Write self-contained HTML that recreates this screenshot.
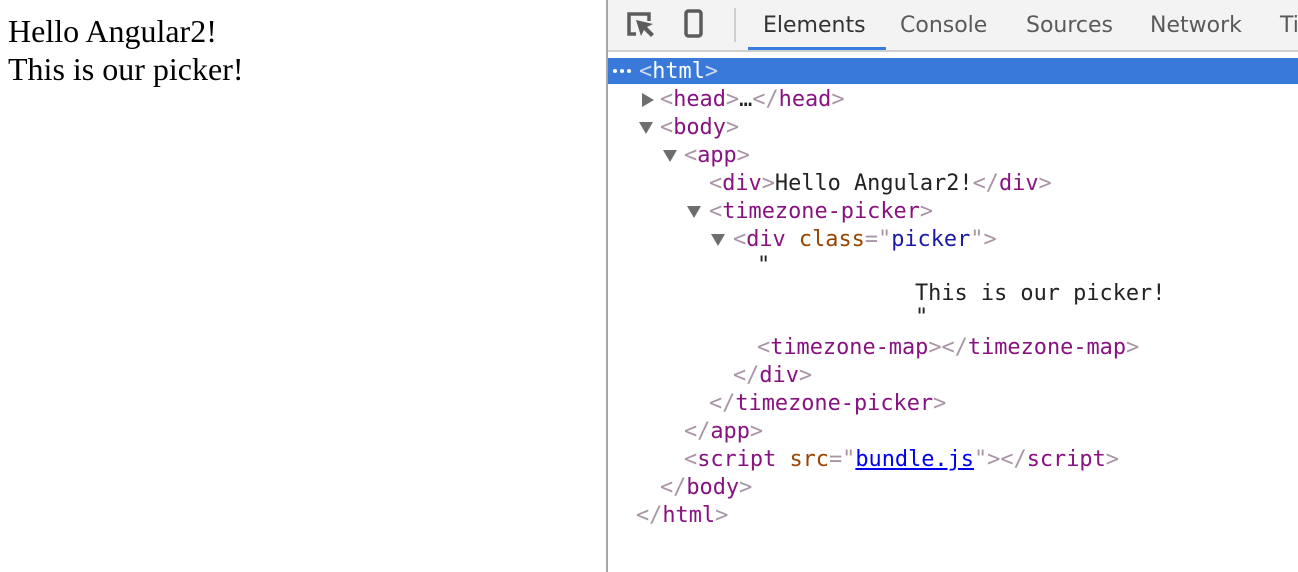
<!DOCTYPE html>
<html><head><meta charset="utf-8"><style>
body{margin:0;width:1298px;height:572px;overflow:hidden;background:#fff;position:relative;font-family:"Liberation Serif",serif}
.l{position:absolute;left:8px;font-size:32px;color:#000;line-height:38px}
#dt{position:absolute;left:606px;top:0;width:692px;height:572px;border-left:2px solid #a6a6a6;box-sizing:border-box;background:#fff}
#tb{position:absolute;left:0;top:0;width:100%;height:50px;background:#f3f3f3;border-bottom:2px solid #cfcfcf}
.tab{position:absolute;top:13px;font-family:"DejaVu Sans","Liberation Sans",sans-serif;font-size:22px;color:#5a5a5a}
.r{position:absolute;font-family:"DejaVu Sans Mono","Liberation Mono",monospace;font-size:21.9px;line-height:28px;white-space:pre;color:#222;margin-top:2px}
.t{color:#881280}.b{color:#a894a6}.a{color:#994500}.v{color:#1a1aa6}
.tri{position:absolute;width:0;height:0}
.right{border-top:7px solid transparent;border-bottom:7px solid transparent;border-left:12px solid #6e6e6e}
.down{border-left:7px solid transparent;border-right:7px solid transparent;border-top:12px solid #6e6e6e}
.dot{position:absolute;top:69px;width:4px;height:4px;border-radius:2px;background:#fff}
</style></head><body>
<div class="l" style="top:12px">Hello Angular2!</div>
<div class="l" style="top:50px">This is our picker!</div>
<div id="dt">
<div id="tb">
<svg style="position:absolute;left:18px;top:10px" width="30" height="30" viewBox="0 0 30 30"><path d="M10 24H3V4h20v7" fill="none" stroke="#5c5c5c" stroke-width="3.5"/><path d="M10 10l5 16 3-6 7 7 3-3-7-7 6-3z" fill="#5c5c5c"/></svg>
<svg style="position:absolute;left:76px;top:9px" width="20" height="30" viewBox="0 0 20 30"><rect x="2" y="2" width="15" height="25" rx="2.5" fill="none" stroke="#5c5c5c" stroke-width="3.5"/></svg>
<div style="position:absolute;left:126px;top:8px;width:2px;height:34px;background:#d0d0d0"></div>
<div class="tab" style="left:155px;color:#333">Elements</div>
<div style="position:absolute;left:140px;top:47px;width:138px;height:3px;background:#3a7de0"></div>
<div class="tab" style="left:292px">Console</div>
<div class="tab" style="left:418px">Sources</div>
<div class="tab" style="left:542px">Network</div>
<div class="tab" style="left:672px">Ti</div>
</div>
<div style="position:absolute;left:0;top:58px;width:100%;height:26px;background:#3879d9"></div>
<div class="dot" style="left:5px"></div><div class="dot" style="left:12px"></div><div class="dot" style="left:19px"></div>
<div class="r" style="left:31px;top:56px;color:#fff"><span style="color:#cfd8ea">&lt;</span>html<span style="color:#cfd8ea">&gt;</span></div>
<div class="tri right" style="left:34px;top:93px"></div>
<div class="r" style="left:52px;top:84px"><span class="b">&lt;</span><span class="t">head</span><span class="b">&gt;</span>…<span class="b">&lt;/</span><span class="t">head</span><span class="b">&gt;</span></div>
<div class="tri down" style="left:31px;top:122px"></div>
<div class="r" style="left:52px;top:112px"><span class="b">&lt;</span><span class="t">body</span><span class="b">&gt;</span></div>
<div class="tri down" style="left:55px;top:150px"></div>
<div class="r" style="left:76px;top:140px"><span class="b">&lt;</span><span class="t">app</span><span class="b">&gt;</span></div>
<div class="r" style="left:101px;top:168px"><span class="b">&lt;</span><span class="t">div</span><span class="b">&gt;</span>Hello Angular2!<span class="b">&lt;/</span><span class="t">div</span><span class="b">&gt;</span></div>
<div class="tri down" style="left:79px;top:206px"></div>
<div class="r" style="left:101px;top:196px"><span class="b">&lt;</span><span class="t">timezone-picker</span><span class="b">&gt;</span></div>
<div class="tri down" style="left:103px;top:234px"></div>
<div class="r" style="left:125px;top:224px"><span class="b">&lt;</span><span class="t">div</span> <span class="a">class</span><span class="b">="</span><span class="v">picker</span><span class="b">"&gt;</span></div>
<div class="r" style="left:149px;top:250px">"</div>
<div class="r" style="left:307px;top:278px">This is our picker!</div>
<div class="r" style="left:307px;top:302px">"</div>
<div class="r" style="left:149px;top:332px"><span class="b">&lt;</span><span class="t">timezone-map</span><span class="b">&gt;&lt;/</span><span class="t">timezone-map</span><span class="b">&gt;</span></div>
<div class="r" style="left:125px;top:360px"><span class="b">&lt;/</span><span class="t">div</span><span class="b">&gt;</span></div>
<div class="r" style="left:101px;top:388px"><span class="b">&lt;/</span><span class="t">timezone-picker</span><span class="b">&gt;</span></div>
<div class="r" style="left:76px;top:416px"><span class="b">&lt;/</span><span class="t">app</span><span class="b">&gt;</span></div>
<div class="r" style="left:76px;top:444px"><span class="b">&lt;</span><span class="t">script</span> <span class="a">src</span><span class="b">="</span><span style="color:#00e;text-decoration:underline">bundle.js</span><span class="b">"&gt;&lt;/</span><span class="t">script</span><span class="b">&gt;</span></div>
<div class="r" style="left:52px;top:472px"><span class="b">&lt;/</span><span class="t">body</span><span class="b">&gt;</span></div>
<div class="r" style="left:28px;top:500px"><span class="b">&lt;/</span><span class="t">html</span><span class="b">&gt;</span></div>
</div>
</body></html>
